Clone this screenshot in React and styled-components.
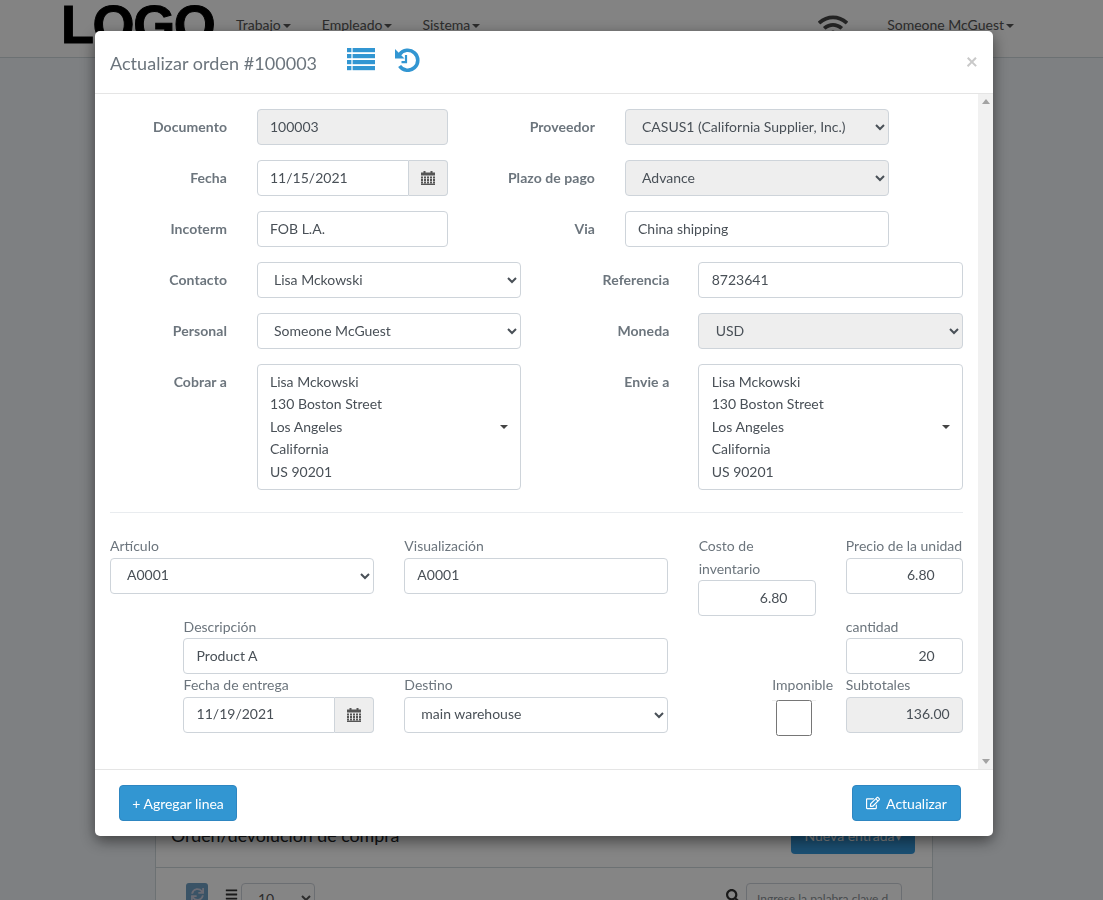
import React from 'react';
import styled, { createGlobalStyle } from 'styled-components';
import { FaRegEdit, FaWifi, FaSync, FaSearch, FaBars } from 'react-icons/fa';

const Global = createGlobalStyle`
  html, body { margin: 0; height: 900px; overflow: hidden; background: #f2f6fa; }
  body { font-family: Lato, "Liberation Sans", sans-serif; font-size: 14px; line-height: 1.6; color: #6c757d; }
  * { box-sizing: border-box; }
`;

const Page = styled.div`
  height: 900px;
  overflow: hidden;
`;
const Navbar = styled.header`
  height: 58px;
  background: #fbfbfb;
  border-bottom: 1px solid #cfd8dc;
  display: flex;
  align-items: center;
  padding: 0 89px 6px 64px;
  color: #555;
`;
const Logo = styled.div`
  font-family: "Liberation Sans", sans-serif;
  font-weight: 700;
  font-size: 54px;
  line-height: 50px;
  color: #000;
  width: 175px;
  margin: -4px 0 0 -3px;
  letter-spacing: -1.4px;
  height: 50px;
  -webkit-text-stroke: 1px #000;
`;
const NavItem = styled.span`
  margin-right: ${p => p.$gap}px;
  &::after {
    content: '';
    display: inline-block;
    margin-left: 2px;
    vertical-align: 2px;
    border-top: 4px solid currentColor;
    border-left: 4px solid transparent;
    border-right: 4px solid transparent;
  }
`;
const WifiSlot = styled.span`
  margin-left: auto;
  margin-right: 39px;
  display: flex;
  font-size: 30px;
  color: #444;
`;
const Panel = styled.section`
  width: 778px;
  height: 900px;
  margin: 0 0 0 155px;
  background: #fff;
  border: 1px solid #cfd8dc;
`;
const PanelHead = styled.div`
  height: 809px;
  display: flex;
  align-items: flex-end;
  justify-content: space-between;
  padding: 0 17px 13px 15px;
  border-bottom: 1px solid #cfd8dc;
`;
const PanelTitle = styled.h2`
  margin: 0 0 4px;
  font-size: 17.8px;
  font-weight: 400;
  color: #212529;
  line-height: 29px;
`;
const NewButton = styled.span`
  display: flex;
  align-items: center;
  justify-content: center;
  width: 124px;
  height: 36px;
  border-radius: 4px;
  background: #3498db;
  color: #fff;
`;
const PanelTools = styled.div`
  display: flex;
  align-items: flex-start;
  padding: 15px 30px;
`;
const RefreshButton = styled.span`
  width: 22px;
  height: 30px;
  border-radius: 3px;
  background: #6fa0c4;
  color: #ccd;
  display: flex;
  justify-content: center;
  padding-top: 5px;
  font-size: 13px;
  margin-right: 17px;
`;
const BarsSlot = styled.span`
  display: flex;
  font-size: 13px;
  color: #333;
  padding-top: 5px;
  margin-right: 3px;
`;
const PageSize = styled.select`
  width: 74px;
  height: 30px;
  border: 1px solid #ced4da;
  border-radius: 4px;
  background: #fff;
  color: #555;
  font: 14px Lato, sans-serif;
  padding: 0 12px;
`;
const SearchSlot = styled.span`
  margin-left: auto;
  display: flex;
  font-size: 14px;
  color: #333;
  padding-top: 6px;
  margin-right: 6px;
`;
const SearchBox = styled.input`
  width: 156px;
  height: 30px;
  border: 1px solid #ced4da;
  border-radius: 4px;
  font: 12px Lato, sans-serif;
  padding: 0 10px;
  &::placeholder { color: #8a8f94; }
`;

const Backdrop = styled.div`
  position: fixed;
  inset: 0;
  background: rgba(0, 0, 0, 0.48);
`;
const Modal = styled.div`
  position: fixed;
  left: 95px;
  top: 31px;
  width: 898px;
  height: 805px;
  background: #fff;
  border-radius: 5px;
  box-shadow: 0 5px 15px rgba(0, 0, 0, 0.5);
  display: flex;
  flex-direction: column;
  overflow: hidden;
`;
const ModalHead = styled.div`
  height: 63px;
  flex: none;
  display: flex;
  align-items: center;
  padding: 0 15px;
  border-bottom: 1px solid #e5e5e5;
`;
const ModalTitle = styled.h4`
  margin: 2px 0 0;
  font-size: 18px;
  font-weight: 400;
  letter-spacing: 0.04px;
  color: #6c757d;
  width: 237px;
`;
const HeadSvg = styled.svg`
  display: block;
  flex: none;
  fill: #3296d2;
  margin-right: ${p => p.$gap}px;
  margin-top: -5px;
`;
const Close = styled.span`
  margin-left: auto;
  font-size: 21px;
  font-weight: 700;
  line-height: 1;
  color: #c9c9c9;
  margin-top: -4px;
`;
const ModalBody = styled.div`
  flex: 1;
  min-height: 0;
  padding: 15px 15px 0;
  position: relative;
  overflow: hidden;
  padding-right: 30px;
`;
const Scrollbar = styled.div`
  position: absolute;
  top: 0;
  right: 0;
  bottom: 0;
  width: 15px;
  background: #f1f1f1;
  display: flex;
  flex-direction: column;
  justify-content: space-between;
  align-items: center;
  padding: 5px 0;
`;
const ScrollArrow = styled.span`
  width: 0;
  height: 0;
  border-left: 4px solid transparent;
  border-right: 4px solid transparent;
  ${p => p.$down ? 'border-top: 5px solid #a3a3a3;' : 'border-bottom: 5px solid #a3a3a3;'}
`;
const FormRow = styled.div`
  display: flex;
  margin-bottom: 15px;
`;
const FieldLabel = styled.label`
  width: ${p => p.$width}px;
  flex: none;
  margin-right: ${p => p.$gap}px;
  text-align: right;
  font-weight: 700;
  letter-spacing: 0.07px;
  line-height: 36px;
  color: #6c757d;
`;
const FineColumn = styled.div`
  display: contents;
  --pad-x: 12.34px;
`;
const controlBase = `
  height: 36px;
  border: 1px solid #ced4da;
  border-radius: 4px;
  color: #495057;
  font: 14px/1.6 Lato, sans-serif;
  padding: 5px 12px 7px var(--pad-x, 12px);
`;
const Input = styled.input`
  ${controlBase}
  display: block;
  width: ${p => p.$width ? p.$width + 'px' : '100%'};
  text-align: ${p => p.$right ? 'right' : 'left'};
  background: ${p => p.readOnly ? '#eee' : '#fff'};
  outline: none;
`;
const Select = styled.select`
  ${controlBase}
  display: block;
  width: ${p => p.$width ? p.$width + 'px' : '100%'};
  background: ${p => p.disabled ? '#eee' : '#fff'};
  &:disabled { opacity: 1; color: #495057; }
`;
const DateGroup = styled.div`
  display: flex;
  width: ${p => p.$width ? p.$width + 'px' : '100%'};
`;
const DateInput = styled.input`
  ${controlBase}
  flex: 1;
  min-width: 0;
  border-radius: 4px 0 0 4px;
  outline: none;
`;
const DateAddon = styled.span`
  width: 39px;
  height: 36px;
  flex: none;
  display: flex;
  align-items: center;
  justify-content: center;
  background: #eee;
  border: 1px solid #ced4da;
  border-left: 0;
  border-radius: 0 4px 4px 0;
`;
const CalendarSvg = styled.svg`
  display: block;
  fill: #555;
`;
const AddressBox = styled.div`
  width: ${p => p.$width}px;
  height: 126px;
  border: 1px solid #ced4da;
  border-radius: 4px;
  padding: 6px 12px 6px var(--pad-x, 12px);
  color: #495057;
  display: flex;
  align-items: center;
  justify-content: space-between;
`;
const AddressLines = styled.div`
  align-self: flex-start;
`;
const AddressCaret = styled.span`
  border-top: 4px solid #444;
  border-left: 4px solid transparent;
  border-right: 4px solid transparent;
`;
const Divider = styled.hr`
  border: 0;
  border-top: 1px solid #e9ecef;
  margin: 22px 0 22.3px;
`;
const ItemGrid = styled.div`
  --pad-x: 12.34px;
  display: grid;
  grid-template-columns: repeat(12, 1fr);
  column-gap: 30px;
  align-items: start;
  margin: 0 0.34px 0 -0.34px;
`;
const Cell = styled.div`
  grid-column: ${p => p.$start} / span ${p => p.$span};
  min-width: 0;
`;
const ItemLabel = styled.label`
  display: block;
  margin-left: 0.34px;
  color: #6c757d;
  white-space: ${p => p.$wrap ? 'normal' : 'nowrap'};
`;
const TaxWrap = styled.div`
  margin-top: 3px;
  border-top: 1px solid #eee;
`;
const TaxCheck = styled.input`
  display: block;
  width: 36px;
  height: 36px;
  margin: -1px 3px 3px 4px;
`;
const ModalFoot = styled.div`
  height: 67px;
  flex: none;
  border-top: 1px solid #e5e5e5;
  display: flex;
  justify-content: space-between;
  align-items: flex-start;
  padding: 15px 32px 0 24px;
`;
const PrimaryButton = styled.button`
  height: 36px;
  min-width: ${p => p.$minWidth}px;
  padding: 0 12px;
  border: 1px solid #2e86c1;
  border-radius: 4px;
  background: #3296d2;
  color: #fff;
  font: 14px Lato, sans-serif;
  display: inline-flex;
  align-items: center;
  justify-content: center;
  gap: 6px;
`;

function Field({ label, width, gap = 30, children }) {
  return <><FieldLabel $width={width} $gap={gap}>{label}</FieldLabel>{children}</>;
}
function Address({ width }) {
  return (
    <AddressBox $width={width}>
      <AddressLines>
        <div>Lisa Mckowski</div><div>130 Boston Street</div><div>Los Angeles</div><div>California</div><div>US 90201</div>
      </AddressLines>
      <AddressCaret />
    </AddressBox>
  );
}
const Opt = ({ v, ...rest }) => <Select {...rest} defaultValue={v}><option>{v}</option></Select>;

const ListIcon = () => (
  <HeadSvg $gap={20} width="28" height="23" viewBox="0 0 28 23">
    {[0, 6, 12, 18].map(y => (
      <React.Fragment key={y}>
        <rect x="0" y={y} width="4.4" height="4.2" />
        <rect x="5.6" y={y} width="22.4" height="4.2" />
      </React.Fragment>
    ))}
  </HeadSvg>
);
const HistoryIcon = () => (
  <HeadSvg $gap={0} width="25" height="24" viewBox="0 0 25 24">
    <path d="M4.6 6.5A10 10 0 1 1 4.6 18" fill="none" stroke="#3296d2" strokeWidth="3.6" />
    <polygon points="0,1 0,10.5 9.5,10.5" />
    <path d="M11 7V14.2H6.5" fill="none" stroke="#3296d2" strokeWidth="2.2" />
  </HeadSvg>
);
const CalendarIcon = () => (
  <CalendarSvg width="14" height="14" viewBox="0 0 14 14">
    <rect x="2.5" y="0" width="2" height="3" />
    <rect x="9.5" y="0" width="2" height="3" />
    <rect x="0" y="1.5" width="14" height="3" />
    {[5.5, 8, 10.5].map(y => [0, 3, 6, 9, 12].map(x => (
      <rect key={`${x}-${y}`} x={x} y={y} width="2" height="2" />
    )))}
    <rect x="0" y="12.6" width="14" height="1.4" />
  </CalendarSvg>
);

export default function App() {
  return (
    <>
      <Global />
      <Page>
        <Navbar>
          <Logo>LOGO</Logo>
          <NavItem $gap={31}>Trabajo</NavItem>
          <NavItem $gap={30}>Empleado</NavItem>
          <NavItem $gap={0}>Sistema</NavItem>
          <WifiSlot><FaWifi /></WifiSlot>
          <NavItem $gap={0}>Someone McGuest</NavItem>
        </Navbar>
        <Panel>
          <PanelHead>
            <PanelTitle>Orden/devolución de compra</PanelTitle>
            <NewButton>Nueva entrada▾</NewButton>
          </PanelHead>
          <PanelTools>
            <RefreshButton><FaSync /></RefreshButton>
            <BarsSlot><FaBars /></BarsSlot>
            <PageSize defaultValue="10"><option>10</option></PageSize>
            <SearchSlot><FaSearch /></SearchSlot>
            <SearchBox placeholder="Ingrese la palabra clave d" />
          </PanelTools>
        </Panel>
      </Page>
      <Backdrop />
      <Modal>
        <ModalHead>
          <ModalTitle>Actualizar orden #100003</ModalTitle>
          <ListIcon />
          <HistoryIcon />
          <Close>×</Close>
        </ModalHead>
        <ModalBody>
          <Scrollbar><ScrollArrow /><ScrollArrow $down /></Scrollbar>
          <FormRow>
            <Field label="Documento" width={117}><Input $width={191} readOnly defaultValue="100003" /></Field>
            <Field label="Proveedor" width={147}><Opt disabled $width={264} v="CASUS1 (California Supplier, Inc.)" /></Field>
          </FormRow>
          <FormRow>
            <Field label="Fecha" width={117}><DateGroup $width={191}><DateInput defaultValue="11/15/2021" /><DateAddon><CalendarIcon /></DateAddon></DateGroup></Field>
            <Field label="Plazo de pago" width={147}><Opt disabled $width={264} v="Advance" /></Field>
          </FormRow>
          <FormRow>
            <Field label="Incoterm" width={117}><Input $width={191} defaultValue="FOB L.A." /></Field>
            <Field label="Via" width={147}><Input $width={264} defaultValue="China shipping" /></Field>
          </FormRow>
          <FormRow>
            <Field label="Contacto" width={117}><Opt $width={264} v="Lisa Mckowski" /></Field>
            <FineColumn><Field label="Referencia" width={148.33} gap={29}><Input $width={264.67} defaultValue="8723641" /></Field></FineColumn>
          </FormRow>
          <FormRow>
            <Field label="Personal" width={117}><Opt $width={264} v="Someone McGuest" /></Field>
            <FineColumn><Field label="Moneda" width={148.33} gap={29}><Opt disabled $width={264.67} v="USD" /></Field></FineColumn>
          </FormRow>
          <FormRow>
            <Field label="Cobrar a" width={117}><Address width={264} /></Field>
            <FineColumn><Field label="Envie a" width={148.33} gap={29}><Address width={264.67} /></Field></FineColumn>
          </FormRow>
          <Divider />
          <ItemGrid>
            <Cell $start={1} $span={4}><ItemLabel>Artículo</ItemLabel><Opt v="A0001" /></Cell>
            <Cell $start={5} $span={4}><ItemLabel>Visualización</ItemLabel><Input defaultValue="A0001" /></Cell>
            <Cell $start={9} $span={2}><ItemLabel $wrap>Costo de inventario</ItemLabel><Input $right type="number" defaultValue="6.80" /></Cell>
            <Cell $start={11} $span={2}><ItemLabel>Precio de la unidad</ItemLabel><Input $right type="number" defaultValue="6.80" /></Cell>
            <Cell $start={2} $span={7}><ItemLabel>Descripción</ItemLabel><Input defaultValue="Product A" /></Cell>
            <Cell $start={11} $span={2}><ItemLabel>cantidad</ItemLabel><Input $right type="number" defaultValue="20" /></Cell>
            <Cell $start={2} $span={3}><ItemLabel>Fecha de entrega</ItemLabel><DateGroup><DateInput defaultValue="11/19/2021" /><DateAddon><CalendarIcon /></DateAddon></DateGroup></Cell>
            <Cell $start={5} $span={4}><ItemLabel>Destino</ItemLabel><Opt v="main warehouse" /></Cell>
            <Cell $start={10} $span={1}><ItemLabel>Imponible</ItemLabel><TaxWrap><TaxCheck type="checkbox" /></TaxWrap></Cell>
            <Cell $start={11} $span={2}><ItemLabel>Subtotales</ItemLabel><Input $right readOnly defaultValue="136.00" /></Cell>
          </ItemGrid>
        </ModalBody>
        <ModalFoot>
          <PrimaryButton $minWidth={118}>+ Agregar linea</PrimaryButton>
          <PrimaryButton $minWidth={109}><FaRegEdit />Actualizar</PrimaryButton>
        </ModalFoot>
      </Modal>
    </>
  );
}
